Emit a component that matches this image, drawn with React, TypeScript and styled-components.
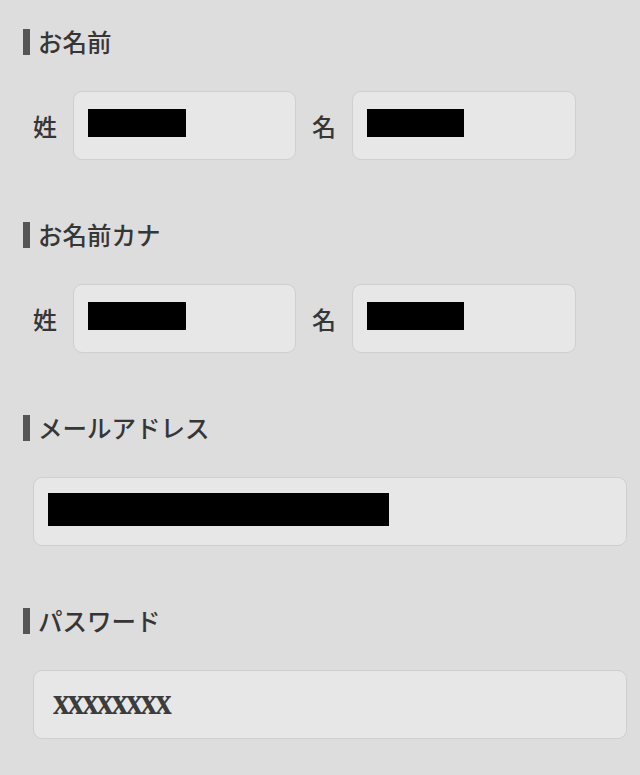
import React from 'react';
import styled, { createGlobalStyle } from 'styled-components';

const GlobalStyle = createGlobalStyle`
  html, body {
    margin: 0;
    padding: 0;
    background: #dddddd;
  }
  body {
    font-family: "Noto Sans CJK JP", "Noto Sans", sans-serif;
    color: #333333;
  }
`;

const Page = styled.div`
  width: 640px;
  min-height: 775px;
  box-sizing: border-box;
  padding: 29px 13px 0 23px;
  display: flex;
  flex-direction: column;
  gap: 62px;
`;

const Section = styled.section`
  display: flex;
  flex-direction: column;
  gap: 36px;
`;

const Heading = styled.h2`
  margin: 0;
  display: flex;
  align-items: center;
  gap: 8px;
  height: 26px;
  font-size: 24.5px;
  font-weight: 500;
  line-height: 26px;
  color: #363636;

  &::before {
    content: '';
    display: block;
    width: 7px;
    height: 26px;
    background: #555555;
  }
`;

const NameRow = styled.div`
  display: flex;
  align-items: center;
  padding-left: 10px;
`;

const NamePart = styled.div`
  display: flex;
  align-items: center;
  gap: 16px;
  margin-right: 16px;
`;

const Label = styled.span`
  width: 24px;
  font-size: 24px;
  font-weight: 500;
  color: #363636;
`;

const Field = styled.div<{ $width?: number }>`
  width: ${({ $width }) => ($width ? `${$width}px` : 'auto')};
  height: 69px;
  box-sizing: border-box;
  margin-left: ${({ $width }) => ($width ? '0' : '10px')};
  border: 1px solid #cfcfcf;
  border-radius: 9px;
  background: #e7e7e7;
  display: flex;
  align-items: center;
  padding-left: 14px;
`;

const Redacted = styled.span<{ $w: number; $h: number }>`
  display: block;
  width: ${({ $w }) => $w}px;
  height: ${({ $h }) => $h}px;
  background: #000000;
  margin-top: -5px;
`;

const Masked = styled.span`
  display: inline-block;
  font-family: "Liberation Serif", serif;
  font-weight: 700;
  font-size: 33px;
  letter-spacing: -1.9px;
  color: #3c3c3c;
  padding-left: 5px;
  margin-top: -4px;
  transform: scaleY(1.13);
`;

const NameFields: React.FC = () => (
  <NameRow>
    <NamePart>
      <Label>姓</Label>
      <Field $width={223}>
        <Redacted $w={98} $h={28} />
      </Field>
    </NamePart>
    <NamePart>
      <Label>名</Label>
      <Field $width={224}>
        <Redacted $w={97} $h={28} />
      </Field>
    </NamePart>
  </NameRow>
);

export default function App() {
  return (
    <>
      <GlobalStyle />
      <Page>
        <Section>
          <Heading>お名前</Heading>
          <NameFields />
        </Section>
        <Section>
          <Heading>お名前カナ</Heading>
          <NameFields />
        </Section>
        <Section>
          <Heading>メールアドレス</Heading>
          <Field>
            <Redacted $w={341} $h={33} />
          </Field>
        </Section>
        <Section>
          <Heading>パスワード</Heading>
          <Field>
            <Masked>xxxxxxxx</Masked>
          </Field>
        </Section>
      </Page>
    </>
  );
}
